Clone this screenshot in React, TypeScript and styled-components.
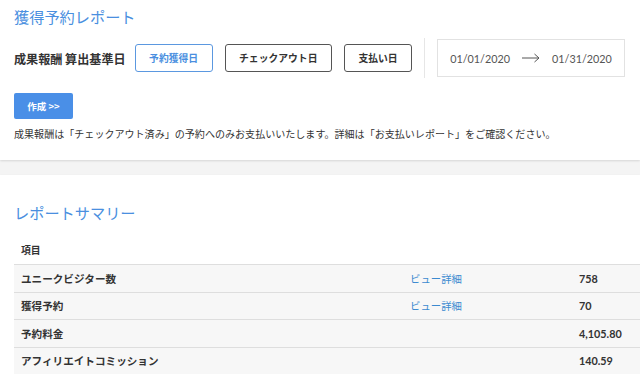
import React from "react";
import styled, { createGlobalStyle } from "styled-components";

const Global = createGlobalStyle`
  html, body { margin: 0; padding: 0; background: #f4f4f4; }
  body { font-family: "Noto Sans CJK JP", "Noto Sans", sans-serif; color: #333; }
`;

const Page = styled.div`
  display: flex;
  flex-direction: column;
  gap: 15px;
  width: 640px;
  overflow: hidden;
`;

const Card = styled.section<{ $padRight?: number }>`
  background: #fff;
  padding: 0 ${(p) => p.$padRight ?? 14}px 0 14px;
  box-shadow: 0 1px 2px rgba(0, 0, 0, 0.12);
`;

const TopCard = styled(Card)`
  padding-top: 6px;
  padding-bottom: 19px;
`;

const BottomCard = styled(Card)`
  padding-top: 27px;
  padding-bottom: 20px;
`;

const Title = styled.h1`
  margin: 0;
  font-size: 15.2px;
  line-height: 20px;
  font-weight: 400;
  color: #4a8fe0;
  letter-spacing: 0;
`;

const CriteriaRow = styled.div`
  display: flex;
  align-items: center;
  gap: 12px;
  margin-top: 12px;
  height: 40px;
`;

const Label = styled.span`
  font-size: 12.1px;
  font-weight: 700;
  color: #333;
  margin-right: -3px;
  white-space: nowrap;
`;

const ToggleButton = styled.button<{ $active?: boolean }>`
  height: 28px;
  padding: 0 13.5px;
  border-radius: 3px;
  border: 1px solid ${(p) => (p.$active ? "#5b98e0" : "#555")};
  background: #fff;
  color: ${(p) => (p.$active ? "#4a8fe0" : "#333")};
  font-family: "Noto Sans CJK JP", sans-serif;
  font-size: 9.8px;
  font-weight: 700;
  white-space: nowrap;
  cursor: pointer;
`;

const Divider = styled.div`
  width: 1px;
  height: 40px;
  background: #e6e6e6;
`;

const DateBox = styled.div`
  display: flex;
  align-items: center;
  gap: 12px;
  height: 38px;
  box-sizing: border-box;
  padding: 0 12px;
  border: 1.5px solid #e2e2e2;
  font-family: Lato, "Noto Sans", sans-serif;
  font-size: 10.8px;
  color: #555;
`;

const Arrow = styled.svg`
  width: 18px;
  height: 10px;
`;

const CreateButton = styled.button`
  margin-top: 15px;
  width: 59px;
  height: 26px;
  border: none;
  border-radius: 2px;
  background: #4a8fe7;
  color: #fff;
  font-family: "Noto Sans CJK JP", sans-serif;
  font-size: 9.5px;
  font-weight: 700;
  display: block;
`;

const Note = styled.p`
  margin: 8px 0 0;
  font-size: 10.05px;
  line-height: 14px;
  color: #333;
  white-space: nowrap;
`;

const Table = styled.div`
  margin-top: 14px;
  display: flex;
  flex-direction: column;
`;

const Row = styled.div<{ $header?: boolean }>`
  display: grid;
  grid-template-columns: 389px 169px 1fr;
  align-items: center;
  height: ${(p) => (p.$header ? 28 : 27.5)}px;
  box-sizing: border-box;
  padding-left: 7px;
  background: ${(p) => (p.$header ? "#fff" : "#f7f7f7")};
  border-top: ${(p) => (p.$header ? "none" : "1px solid #dedede")};
  font-size: ${(p) => (p.$header ? 9.8 : 10.6)}px;
  font-weight: 700;
  color: #333;
`;

const DetailLink = styled.a`
  color: #3b8ad0;
  font-weight: 400;
  font-size: 10.4px;
  text-decoration: none;
`;

const Value = styled.span`
  font-family: Lato, "Noto Sans", sans-serif;
  font-size: 10.8px;
  font-weight: 700;
  color: #333;
`;

const rows = [
  { label: "ユニークビジター数", link: true, value: "758" },
  { label: "獲得予約", link: true, value: "70" },
  { label: "予約料金", link: false, value: "4,105.80" },
  { label: "アフィリエイトコミッション", link: false, value: "140.59" },
];

export default function App() {
  return (
    <>
      <Global />
      <Page>
        <TopCard>
          <Title>獲得予約レポート</Title>
          <CriteriaRow>
            <Label>成果報酬 算出基準日</Label>
            <ToggleButton $active>予約獲得日</ToggleButton>
            <ToggleButton>チェックアウト日</ToggleButton>
            <ToggleButton>支払い日</ToggleButton>
            <Divider />
            <DateBox>
              <span>01/01/2020</span>
              <Arrow viewBox="0 0 18 10">
                <path d="M0 5 H17 M12.5 1 L17 5 L12.5 9" fill="none" stroke="#555" strokeWidth="1" />
              </Arrow>
              <span>01/31/2020</span>
            </DateBox>
          </CriteriaRow>
          <CreateButton>作成 &gt;&gt;</CreateButton>
          <Note>
            成果報酬は「チェックアウト済み」の予約へのみお支払いいたします。詳細は「お支払いレポート」をご確認ください。
          </Note>
        </TopCard>
        <BottomCard $padRight={0}>
          <Title>レポートサマリー</Title>
          <Table>
            <Row $header>
              <span>項目</span>
              <span />
              <span />
            </Row>
            {rows.map((r) => (
              <Row key={r.label}>
                <span>{r.label}</span>
                <span>{r.link ? <DetailLink href="#">ビュー詳細</DetailLink> : null}</span>
                <Value>{r.value}</Value>
              </Row>
            ))}
          </Table>
        </BottomCard>
      </Page>
    </>
  );
}
